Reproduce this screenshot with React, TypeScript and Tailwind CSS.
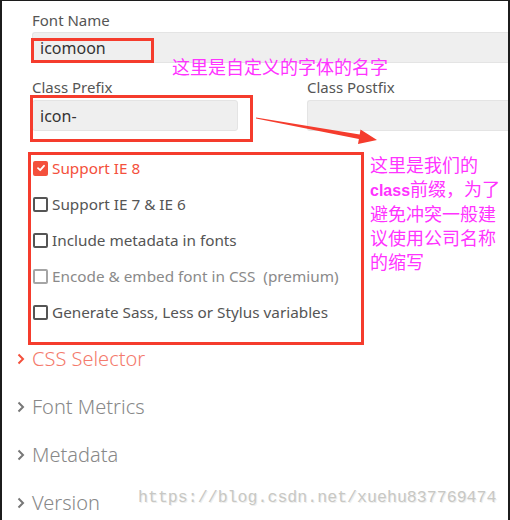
import React from 'react';

const ui = { fontFamily: '"Noto Sans", "Open Sans", sans-serif' };
const cjk = { fontFamily: '"Noto Sans CJK SC", "Noto Sans", sans-serif' };

type Option = { label: string; checked?: boolean; disabled?: boolean };

const options: Option[] = [
    { label: 'Support IE 8', checked: true },
    { label: 'Support IE 7 & IE 6' },
    { label: 'Include metadata in fonts' },
    { label: 'Encode & embed font in CSS\u00a0\u00a0(premium)', disabled: true },
    { label: 'Generate Sass, Less or Stylus variables' },
];

const sections = ['CSS Selector', 'Font Metrics', 'Metadata', 'Version'];

const Checkbox = ({ checked, disabled }: { checked?: boolean; disabled?: boolean }) => {
    if (checked) {
        return (
            <span className="flex h-[15px] w-[15px] shrink-0 items-center justify-center rounded-[2px] bg-[#f4503c]">
                <svg width="10" height="10" viewBox="0 0 10 10" fill="none">
                    <polyline points="2,5.2 4.2,7.2 8,2.8" stroke="#fff" strokeWidth="1.8" strokeLinecap="round" strokeLinejoin="round" />
                </svg>
            </span>
        );
    }
    return (
        <span
            className={
                disabled
                    ? 'h-[15px] w-[15px] shrink-0 rounded-[2px] border-2 border-[#a5a5a5]'
                    : 'h-[15px] w-[15px] shrink-0 rounded-[2px] border-2 border-[#555]'
            }
        />
    );
};

const Chevron = ({ color }: { color: string }) => (
    <svg width="8" height="12" viewBox="0 0 8 12" fill="none">
        <polyline points="1.5,1.5 6,6 1.5,10.5" stroke={color} strokeWidth="2" />
    </svg>
);

export default function App() {
    return (
        <div className="relative h-[520px] w-[510px] overflow-hidden border-t border-l-2 border-r-2 border-[#1c1c1c] bg-white" style={ui}>
            {/* form */}
            <div className="pt-[9px] pl-[30px]">
                <div className="text-[15px] leading-[20px] text-[#555]">Font Name</div>
                <div className="mt-[2px] flex h-[31px] items-center rounded-l-[3px] border border-r-0 border-[#e4e4e4] bg-[#efefef] pl-[7px] text-[16px] text-[#333]">
                    icomoon
                </div>

                <div className="mt-[14px] grid grid-cols-[275px_1fr]">
                    <div className="w-[206px]">
                        <div className="text-[15px] leading-[20px] text-[#555]">Class Prefix</div>
                        <div className="mt-[3px] flex h-[31px] items-center rounded-[3px] border border-[#e4e4e4] bg-[#efefef] pl-[7px] text-[16px] text-[#333]">
                            icon-
                        </div>
                    </div>
                    <div>
                        <div className="text-[15px] leading-[20px] text-[#555]">Class Postfix</div>
                        <div className="mt-[3px] h-[31px] rounded-l-[3px] border border-r-0 border-[#e4e4e4] bg-[#efefef]" />
                    </div>
                </div>

                <div className="mt-[19px] flex flex-col pl-[1px]">
                    {options.map((o) => (
                        <label key={o.label} className="flex h-[36px] items-center gap-[4px] text-[15.3px]">
                            <Checkbox checked={o.checked} disabled={o.disabled} />
                            <span className={o.checked ? 'text-[#f4503c]' : o.disabled ? 'text-[#8a8a8a]' : 'text-[#555]'}>
                                {o.label}
                            </span>
                        </label>
                    ))}
                </div>

                <div className="mt-[5px] -ml-[15px] flex flex-col">
                    {sections.map((s, i) => (
                        <div key={s} className="flex h-[48px] items-center gap-[7px]">
                            <Chevron color={i === 0 ? '#f4503c' : '#777'} />
                            <span className={i === 0 ? 'text-[20px] font-light text-[#f47a6c]' : 'text-[20px] font-light text-[#888]'}>
                                {s}
                            </span>
                        </div>
                    ))}
                </div>
            </div>

            {/* annotations */}
            <div className="pointer-events-none absolute left-[29px] top-[37px] h-[25px] w-[123px] border-[3px] border-[#f53c2d]" />
            <div className="pointer-events-none absolute left-[28px] top-[94px] h-[47px] w-[223px] border-[3px] border-[#f53c2d]" />
            <div className="pointer-events-none absolute left-[26px] top-[151px] h-[193px] w-[336px] border-[3px] border-[#f53c2d]" />

            <svg className="pointer-events-none absolute left-[-2px] top-[-1px]" width="510" height="520">
                <polygon
                    points="256,117.4 359.7,134.6 360.5,129.6 377,140 358,144 358.9,139 256,118.6"
                    fill="#f53c2d"
                />
            </svg>

            <div className="absolute left-[170px] top-[55px] text-[18px] leading-[20px] text-[#ff33ff]" style={cjk}>
                这里是自定义的字体的名字
            </div>
            <div className="absolute left-[368px] top-[152px] w-[140px] text-[18px] leading-[23.7px] text-[#ff33ff]" style={cjk}>
                这里是我们的
                <br />
                <span className="text-[16px] font-bold" style={{ fontFamily: '"Liberation Sans", sans-serif' }}>class</span>前缀，为了
                <br />
                避免冲突一般建
                <br />
                议使用公司名称
                <br />
                的缩写
            </div>

            <div
                className="absolute left-[136px] top-[485px] text-[16.6px] text-[#c8c8c4] [text-shadow:1px_1px_0_#eee]"
                style={{ fontFamily: '"Liberation Mono", monospace' }}
            >
                https://blog.csdn.net/xuehu837769474
            </div>
        </div>
    );
}
